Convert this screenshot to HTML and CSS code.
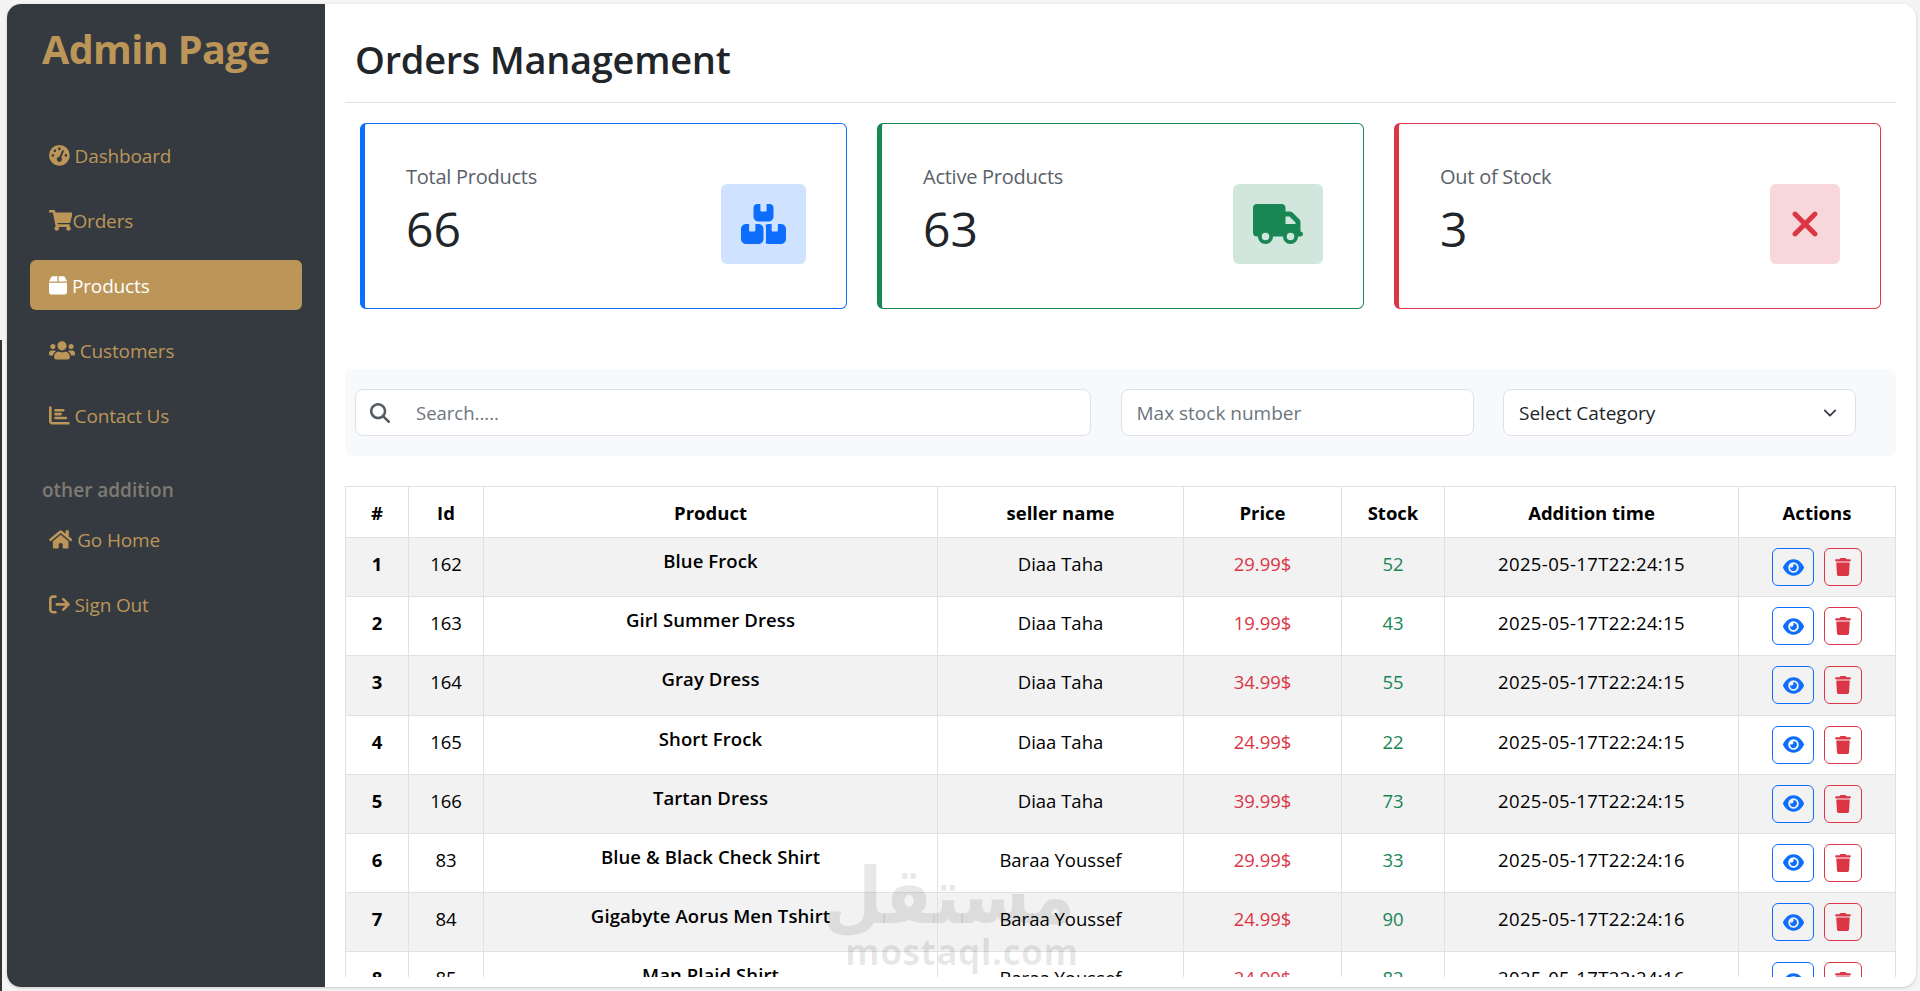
FILE: index.html
```html
<!DOCTYPE html>
<html lang="en">
<head>
<meta charset="utf-8">
<title>Orders Management</title>
<link rel="stylesheet" href="styles.css">
</head>
<body>
<svg class="sprite" aria-hidden="true"><defs>
<path id="eye" d="M288 32c-80.8 0-145.5 36.8-192.6 80.6C48.6 156 17.3 208 2.5 243.7c-3.3 7.9-3.3 16.7 0 24.6C17.3 304 48.6 356 95.4 399.4C142.5 443.2 207.2 480 288 480s145.5-36.8 192.6-80.6c46.8-43.5 78.1-95.4 93-131.1c3.3-7.9 3.3-16.7 0-24.6c-14.9-35.7-46.2-87.7-93-131.1C433.5 68.8 368.8 32 288 32zM144 256a144 144 0 1 1 288 0 144 144 0 1 1 -288 0zm144-64c0 35.3-28.7 64-64 64c-7.1 0-13.9-1.2-20.3-3.3c-5.5-1.8-11.9 1.6-11.7 7.4c.3 6.9 1.3 13.8 3.2 20.7c13.7 51.2 66.4 81.6 117.6 67.9s81.6-66.4 67.9-117.6c-11.1-41.5-47.8-69.4-88.6-71.1c-5.8-.2-9.2 6.1-7.4 11.7c2.1 6.4 3.3 13.2 3.3 20.3z"/>
<path id="trash" d="M135.2 17.7L128 32 32 32C14.3 32 0 46.3 0 64S14.3 96 32 96l384 0c17.7 0 32-14.3 32-32s-14.3-32-32-32l-96 0-7.2-14.3C309.4 6.8 298.3 0 286.2 0L161.8 0c-12.1 0-23.2 6.8-28.6 17.7zM416 128L32 128 53.2 467c1.6 25.3 22.6 45 47.9 45l245.8 0c25.3 0 46.3-19.7 47.9-45L416 128z"/>
</defs></svg>
<div class="edge"></div>
<div class="frame">
  <aside class="sidebar">
    <h2 class="brand">Admin Page</h2>
    <nav class="nav">
      <a class="nav-item"><svg class="ic" viewBox="0 0 512 512"><path d="M0 256a256 256 0 1 1 512 0A256 256 0 1 1 0 256zM288 96a32 32 0 1 0 -64 0 32 32 0 1 0 64 0zM256 416c35.3 0 64-28.7 64-64c0-17.4-6.9-33.1-18.1-44.6L366 161.7c5.3-12.1-.2-26.3-12.3-31.6s-26.3 .2-31.6 12.3L257.9 288c-.6 0-1.3 0-1.9 0c-35.3 0-64 28.7-64 64s28.7 64 64 64zM176 144a32 32 0 1 0 -64 0 32 32 0 1 0 64 0zM96 288a32 32 0 1 0 0-64 32 32 0 1 0 0 64zm352-32a32 32 0 1 0 -64 0 32 32 0 1 0 64 0z"/></svg> Dashboard</a>
      <a class="nav-item"><svg class="ic" viewBox="0 0 576 512"><path d="M528.12 301.319l47.273-208C578.806 78.301 567.391 64 551.99 64H159.208l-9.166-44.81C147.758 8.021 137.93 0 126.529 0H24C10.745 0 0 10.745 0 24v16c0 13.255 10.745 24 24 24h69.883l70.248 343.435C147.325 417.1 136 435.222 136 456c0 30.928 25.072 56 56 56s56-25.072 56-56c0-15.674-6.447-29.835-16.824-40h209.647C430.447 426.165 424 440.326 424 456c0 30.928 25.072 56 56 56s56-25.072 56-56c0-22.172-12.888-41.332-31.579-50.405l5.517-24.276c3.413-15.018-8.002-29.319-23.403-29.319H218.117l-6.545-32h293.145c11.206 0 20.92-7.754 23.403-18.681z"/></svg>Orders</a>
      <a class="nav-item active"><svg class="ic" viewBox="0 0 448 512"><path d="M50.7 58.5L0 160l208 0 0-128L93.7 32C75.5 32 58.9 42.3 50.7 58.5zM240 160l208 0L397.3 58.5C389.1 42.3 372.5 32 354.3 32L240 32l0 128zm208 32L0 192 0 416c0 35.3 28.7 64 64 64l320 0c35.3 0 64-28.7 64-64l0-224z"/></svg> Products</a>
      <a class="nav-item"><svg class="ic" viewBox="0 0 640 512"><path d="M96 224c35.3 0 64-28.7 64-64s-28.7-64-64-64-64 28.7-64 64 28.7 64 64 64zm448 0c35.3 0 64-28.7 64-64s-28.7-64-64-64-64 28.7-64 64 28.7 64 64 64zm32 32h-64c-17.6 0-33.5 7.1-45.1 18.6 40.3 22.1 68.9 62 75.1 109.4h66c17.7 0 32-14.3 32-32v-32c0-35.3-28.7-64-64-64zm-256 0c61.9 0 112-50.1 112-112S381.9 32 320 32 208 82.1 208 144s50.1 112 112 112zm76.8 32h-8.3c-20.8 10-43.9 16-68.5 16s-47.6-6-68.5-16h-8.3C179.6 288 128 339.6 128 403.2V432c0 26.5 21.5 48 48 48h288c26.5 0 48-21.5 48-48v-28.8c0-63.6-51.6-115.2-115.2-115.2zm-223.7-13.4C161.5 263.1 145.6 256 128 256H64c-35.3 0-64 28.7-64 64v32c0 17.7 14.3 32 32 32h65.9c6.3-47.4 34.9-87.3 75.2-109.4z"/></svg> Customers</a>
      <a class="nav-item"><svg class="ic" viewBox="0 0 512 512"><path d="M32 32c17.7 0 32 14.3 32 32l0 336c0 8.8 7.2 16 16 16l400 0c17.7 0 32 14.3 32 32s-14.3 32-32 32L80 480c-44.2 0-80-35.8-80-80L0 64C0 46.3 14.3 32 32 32zm96 96c0-17.7 14.3-32 32-32l192 0c17.7 0 32 14.3 32 32s-14.3 32-32 32l-192 0c-17.7 0-32-14.3-32-32zm32 64l128 0c17.7 0 32 14.3 32 32s-14.3 32-32 32l-128 0c-17.7 0-32-14.3-32-32s14.3-32 32-32zm0 96l256 0c17.7 0 32 14.3 32 32s-14.3 32-32 32l-256 0c-17.7 0-32-14.3-32-32s14.3-32 32-32z"/></svg> Contact Us</a>
    </nav>
    <div class="nav-group">other addition</div>
    <nav class="nav">
      <a class="nav-item"><svg class="ic" viewBox="0 0 576 512"><path d="M280.37 148.26L96 300.11V464a16 16 0 0 0 16 16l112.06-.29a16 16 0 0 0 15.92-16V368a16 16 0 0 1 16-16h64a16 16 0 0 1 16 16v95.64a16 16 0 0 0 16 16.05L464 480a16 16 0 0 0 16-16V300L295.67 148.26a12.19 12.19 0 0 0-15.3 0zM571.6 251.47L488 182.56V44.05a12 12 0 0 0-12-12h-56a12 12 0 0 0-12 12v72.61L318.47 43a48 48 0 0 0-61 0L4.34 251.47a12 12 0 0 0-1.6 16.9l25.5 31A12 12 0 0 0 45.15 301l235.22-193.74a12.19 12.19 0 0 1 15.3 0L530.9 301a12 12 0 0 0 16.9-1.6l25.5-31a12 12 0 0 0-1.7-16.93z"/></svg> Go Home</a>
      <a class="nav-item"><svg class="ic" viewBox="0 0 512 512"><path d="M502.6 278.6c12.5-12.5 12.5-32.8 0-45.3l-128-128c-12.5-12.5-32.8-12.5-45.3 0s-12.5 32.8 0 45.3L402.7 224 192 224c-17.7 0-32 14.3-32 32s14.3 32 32 32l210.7 0-73.4 73.4c-12.5 12.5-12.5 32.8 0 45.3s32.8 12.5 45.3 0l128-128zM160 96c17.7 0 32-14.3 32-32s-14.3-32-32-32L96 32C43 32 0 75 0 128L0 384c0 53 43 96 96 96l64 0c17.7 0 32-14.3 32-32s-14.3-32-32-32l-64 0c-17.7 0-32-14.3-32-32l0-256c0-17.7 14.3-32 32-32l64 0z"/></svg> Sign Out</a>
    </nav>
  </aside>
  <main class="main">
    <header class="head"><h1 class="title">Orders Management</h1></header>
    <section class="cards">
      <div class="card card-blue">
        <div class="stat"><div class="stat-label">Total Products</div><div class="stat-value">66</div></div>
        <div class="stat-icon icon-blue"><svg class="stat-svg" viewBox="0 0 576 512"><path d="M248 0L208 0c-26.5 0-48 21.5-48 48l0 112c0 35.3 28.7 64 64 64l128 0c35.3 0 64-28.7 64-64l0-112c0-26.5-21.5-48-48-48L328 0l0 80c0 8.8-7.2 16-16 16l-48 0c-8.8 0-16-7.2-16-16l0-80zM64 256c-35.3 0-64 28.7-64 64L0 448c0 35.3 28.7 64 64 64l160 0c35.3 0 64-28.7 64-64l0-128c0-35.3-28.7-64-64-64l-40 0 0 80c0 8.8-7.2 16-16 16l-48 0c-8.8 0-16-7.2-16-16l0-80-40 0zM352 512l160 0c35.3 0 64-28.7 64-64l0-128c0-35.3-28.7-64-64-64l-40 0 0 80c0 8.8-7.2 16-16 16l-48 0c-8.8 0-16-7.2-16-16l0-80-40 0c-15 0-28.8 5.1-39.7 13.8c4.9 10.4 7.7 22 7.7 34.2l0 160c0 12.2-2.8 23.8-7.7 34.2C323.2 506.9 337 512 352 512z"/></svg></div>
      </div>
      <div class="card card-green">
        <div class="stat"><div class="stat-label">Active Products</div><div class="stat-value">63</div></div>
        <div class="stat-icon icon-green"><svg class="stat-svg" viewBox="0 0 640 512"><path d="M48 0C21.5 0 0 21.5 0 48L0 368c0 26.5 21.5 48 48 48l16 0c0 53 43 96 96 96s96-43 96-96l128 0c0 53 43 96 96 96s96-43 96-96l32 0c17.7 0 32-14.3 32-32s-14.3-32-32-32l0-64 0-32 0-18.7c0-17-6.7-33.3-18.7-45.3L512 114.7c-12-12-28.3-18.7-45.3-18.7L416 96l0-48c0-26.5-21.5-48-48-48L48 0zM416 160l50.7 0L544 237.3l0 18.7-128 0 0-96zM112 416a48 48 0 1 1 96 0 48 48 0 1 1 -96 0zm368-48a48 48 0 1 1 0 96 48 48 0 1 1 0-96z"/></svg></div>
      </div>
      <div class="card card-red">
        <div class="stat"><div class="stat-label">Out of Stock</div><div class="stat-value">3</div></div>
        <div class="stat-icon icon-red"><svg class="stat-svg" viewBox="0 0 384 512"><path d="M342.6 150.6c12.5-12.5 12.5-32.8 0-45.3s-32.8-12.5-45.3 0L192 210.7 86.6 105.4c-12.5-12.5-32.8-12.5-45.3 0s-12.5 32.8 0 45.3L146.7 256 41.4 361.4c-12.5 12.5-12.5 32.8 0 45.3s32.8 12.5 45.3 0L192 301.3 297.4 406.6c12.5 12.5 32.8 12.5 45.3 0s12.5-32.8 0-45.3L237.3 256 342.6 150.6z"/></svg></div>
      </div>
    </section>
    <section class="filters">
      <label class="search">
        <svg class="search-ic" viewBox="0 0 512 512"><path d="M416 208c0 45.9-14.9 88.3-40 122.7L502.6 457.4c12.5 12.5 12.5 32.8 0 45.3s-32.8 12.5-45.3 0L330.7 376c-34.4 25.2-76.8 40-122.7 40C93.1 416 0 322.9 0 208S93.1 0 208 0S416 93.1 416 208zM208 352a144 144 0 1 0 0-288 144 144 0 1 0 0 288z"/></svg>
        <input class="search-input" type="text" placeholder="Search.....">
      </label>
      <input class="field" type="text" placeholder="Max stock number">
      <div class="select-wrap">
        <select class="field select"><option>Select Category</option></select>
        <svg class="chevron" viewBox="0 0 16 16"><path d="M2 5l6 6 6-6" fill="none" stroke="currentColor" stroke-width="2" stroke-linecap="round" stroke-linejoin="round"/></svg>
      </div>
    </section>
    <div class="table-wrap">
      <table class="table">
        <colgroup><col class="c1"><col class="c2"><col class="c3"><col class="c4"><col class="c5"><col class="c6"><col class="c7"><col class="c8"></colgroup>
        <thead><tr><th>#</th><th>Id</th><th>Product</th><th>seller name</th><th>Price</th><th>Stock</th><th>Addition time</th><th>Actions</th></tr></thead>
        <tbody>
          <tr><td class="num">1</td><td>162</td><td class="prod">Blue Frock</td><td>Diaa Taha</td><td class="price">29.99$</td><td class="stock">52</td><td class="time">2025-05-17T22:24:15</td><td class="acts"><div class="acts-row"><button class="btn btn-view"><svg class="btn-eye" viewBox="0 0 576 512"><use href="#eye"/></svg></button><button class="btn btn-del"><svg class="btn-trash" viewBox="0 0 448 512"><use href="#trash"/></svg></button></div></td></tr>
          <tr><td class="num">2</td><td>163</td><td class="prod">Girl Summer Dress</td><td>Diaa Taha</td><td class="price">19.99$</td><td class="stock">43</td><td class="time">2025-05-17T22:24:15</td><td class="acts"><div class="acts-row"><button class="btn btn-view"><svg class="btn-eye" viewBox="0 0 576 512"><use href="#eye"/></svg></button><button class="btn btn-del"><svg class="btn-trash" viewBox="0 0 448 512"><use href="#trash"/></svg></button></div></td></tr>
          <tr><td class="num">3</td><td>164</td><td class="prod">Gray Dress</td><td>Diaa Taha</td><td class="price">34.99$</td><td class="stock">55</td><td class="time">2025-05-17T22:24:15</td><td class="acts"><div class="acts-row"><button class="btn btn-view"><svg class="btn-eye" viewBox="0 0 576 512"><use href="#eye"/></svg></button><button class="btn btn-del"><svg class="btn-trash" viewBox="0 0 448 512"><use href="#trash"/></svg></button></div></td></tr>
          <tr><td class="num">4</td><td>165</td><td class="prod">Short Frock</td><td>Diaa Taha</td><td class="price">24.99$</td><td class="stock">22</td><td class="time">2025-05-17T22:24:15</td><td class="acts"><div class="acts-row"><button class="btn btn-view"><svg class="btn-eye" viewBox="0 0 576 512"><use href="#eye"/></svg></button><button class="btn btn-del"><svg class="btn-trash" viewBox="0 0 448 512"><use href="#trash"/></svg></button></div></td></tr>
          <tr><td class="num">5</td><td>166</td><td class="prod">Tartan Dress</td><td>Diaa Taha</td><td class="price">39.99$</td><td class="stock">73</td><td class="time">2025-05-17T22:24:15</td><td class="acts"><div class="acts-row"><button class="btn btn-view"><svg class="btn-eye" viewBox="0 0 576 512"><use href="#eye"/></svg></button><button class="btn btn-del"><svg class="btn-trash" viewBox="0 0 448 512"><use href="#trash"/></svg></button></div></td></tr>
          <tr><td class="num">6</td><td>83</td><td class="prod">Blue &amp; Black Check Shirt</td><td>Baraa Youssef</td><td class="price">29.99$</td><td class="stock">33</td><td class="time">2025-05-17T22:24:16</td><td class="acts"><div class="acts-row"><button class="btn btn-view"><svg class="btn-eye" viewBox="0 0 576 512"><use href="#eye"/></svg></button><button class="btn btn-del"><svg class="btn-trash" viewBox="0 0 448 512"><use href="#trash"/></svg></button></div></td></tr>
          <tr><td class="num">7</td><td>84</td><td class="prod">Gigabyte Aorus Men Tshirt</td><td>Baraa Youssef</td><td class="price">24.99$</td><td class="stock">90</td><td class="time">2025-05-17T22:24:16</td><td class="acts"><div class="acts-row"><button class="btn btn-view"><svg class="btn-eye" viewBox="0 0 576 512"><use href="#eye"/></svg></button><button class="btn btn-del"><svg class="btn-trash" viewBox="0 0 448 512"><use href="#trash"/></svg></button></div></td></tr>
          <tr><td class="num">8</td><td>85</td><td class="prod">Man Plaid Shirt</td><td>Baraa Youssef</td><td class="price">24.99$</td><td class="stock">82</td><td class="time">2025-05-17T22:24:16</td><td class="acts"><div class="acts-row"><button class="btn btn-view"><svg class="btn-eye" viewBox="0 0 576 512"><use href="#eye"/></svg></button><button class="btn btn-del"><svg class="btn-trash" viewBox="0 0 448 512"><use href="#trash"/></svg></button></div></td></tr>
        </tbody>
      </table>
    </div>
  </main>
  <div class="watermark"><div class="wm-ar" lang="ar" dir="rtl">مستقل</div><div class="wm-en">mostaql.com</div></div>
</div>
</body>
</html>
```
FILE: styles.css
```css
* { box-sizing: border-box; }
html, body { height: 100%; }
body {
  margin: 0;
  padding: 4px 4px 4px 7px;
  background: #f4f4f4;
  font-family: "Open Sans", "Noto Sans", sans-serif;
  color: #212529;
  overflow: hidden;
}
.sprite { position: absolute; width: 0; height: 0; }
.edge {
  position: absolute;
  left: 0;
  top: 340px;
  bottom: 0;
  width: 2px;
  background: #333;
}
.frame {
  position: relative;
  display: flex;
  height: 983px;
  background: #fff;
  border-radius: 14px;
  overflow: hidden;
  box-shadow: 0 1px 3px rgba(0,0,0,.18);
}
.sidebar {
  flex: 0 0 318px;
  background: #343a40;
  padding: 0 23px;
}
.brand {
  margin: 0;
  padding: 17px 0 0 12px;
  height: 126px;
  font-size: 39.5px;
  line-height: 56px;
  font-weight: 700;
  color: #bc9658;
  letter-spacing: -.6px;
  white-space: nowrap;
}
.nav { display: flex; flex-direction: column; gap: 15px; }
.nav-item {
  display: block;
  height: 50px;
  padding: 0 19px;
  line-height: 52px;
  font-size: 19px;
  letter-spacing: -.15px;
  color: #bc9658;
  border-radius: 6px;
  white-space: nowrap;
}
.nav-item.active { background: #bc9658; color: #fff; }
.ic { height: 20.8px; fill: currentColor; vertical-align: -3px; }
.nav-group {
  padding: 37px 0 0 12px;
  height: 74px;
  line-height: 26px;
  font-size: 19px;
  font-weight: 600;
  letter-spacing: 0;
  color: #7f7b73;
}
.main {
  flex: 1;
  min-width: 0;
  padding: 0 20px 10px 20px;
  display: flex;
  flex-direction: column;
}
.head {
  flex: none;
  height: 99px;
  padding: 27px 0 0 10px;
  border-bottom: 1px solid #dee2e6;
}
.title {
  margin: 0;
  font-size: 38px;
  line-height: 56px;
  font-weight: 600;
  color: #212529;
  letter-spacing: -.28px;
}
.cards {
  flex: none;
  display: grid;
  grid-template-columns: repeat(3, 1fr);
  gap: 30px;
  padding: 20px 15px 0;
}
.card {
  display: flex;
  justify-content: space-between;
  align-items: flex-end;
  height: 186px;
  padding: 0 40px 44px 41px;
  border: 1px solid;
  border-left-width: 5px;
  border-radius: 6px;
}
.card-blue { border-color: #0d6efd; }
.card-green { border-color: #198754; }
.card-red { border-color: #dc3545; }
.stat { align-self: flex-start; padding-top: 39px; }
.stat-label {
  font-size: 20px;
  line-height: 27px;
  color: #5a6168;
  letter-spacing: -.25px;
}
.stat-value {
  font-size: 48px;
  line-height: 62px;
  font-weight: 500;
  color: #212529;
  margin-top: 8px;
}
.stat-icon {
  display: flex;
  align-items: center;
  justify-content: center;
  height: 80px;
  padding: 0 20px;
  border-radius: 6px;
}
.stat-svg { height: 40px; fill: currentColor; display: block; }
.icon-blue { background: #cfe2ff; color: #0d6efd; }
.icon-green { background: #d1e7dd; color: #198754; }
.icon-red { background: #f8d7da; color: #dc3545; }
.filters {
  flex: none;
  display: grid;
  grid-template-columns: 736px 353px 353px;
  column-gap: 29.5px;
  height: 87px;
  margin-top: 60px;
  padding: 20px 0 0 10px;
  background: #f8f9fa;
  border-radius: 8px;
}
.search, .field {
  height: 47px;
  background: #fff;
  border: 1px solid #dee2e6;
  border-radius: 8px;
  font-family: inherit;
  font-size: 18.5px;
  color: #212529;
}
.search { display: flex; align-items: center; padding-left: 14px; }
.search-ic { flex: none; width: 20px; height: 20px; fill: #555c63; }
.search-input {
  flex: 1;
  min-width: 0;
  margin-left: 26px;
  border: 0;
  outline: 0;
  padding: 0;
  font: inherit;
  background: transparent;
}
.field { width: 100%; padding: 0 15px; outline: 0; font-size: 19px; }
.search-input::placeholder, .field::placeholder { color: #6c757d; opacity: 1; }
.select-wrap { position: relative; }
.select { appearance: none; -webkit-appearance: none; }
.chevron {
  position: absolute;
  right: 19px;
  top: 17px;
  width: 14px;
  height: 14px;
  color: #343a40;
  pointer-events: none;
}
.table-wrap {
  flex: none;
  height: 491px;
  margin-top: 30px;
  overflow: hidden;
}
.table {
  width: 1550px;
  table-layout: fixed;
  border-collapse: collapse;
  color: #000;
  font-size: 18.5px;
}
.c1 { width: 63px; }
.c2 { width: 75px; }
.c3 { width: 454px; }
.c4 { width: 246px; }
.c5 { width: 158px; }
.c6 { width: 103px; }
.c7 { width: 294px; }
.c8 { width: 157px; }
th, td {
  border: 1px solid #dee2e6;
  text-align: center;
  white-space: nowrap;
  padding: 0 8px;
}
th { height: 51px; font-weight: 700; line-height: 26px; padding-top: 1px; }
td { height: 59.2px; vertical-align: top; padding-top: 13px; line-height: 26px; }
tbody tr:nth-child(odd) td { background: #f2f2f2; }
.num { font-weight: 700; }
.prod { font-weight: 600; padding-top: 10px; letter-spacing: .1px; }
.price { color: #dc3545; }
.stock { color: #198754; }
.time { letter-spacing: .37px; }
td.acts { padding: 10px 0 0 33px; }
.acts-row { display: flex; gap: 10px; }
.btn {
  display: flex;
  align-items: center;
  justify-content: center;
  height: 38px;
  padding: 0;
  background: transparent;
  border: 1px solid;
  border-radius: 6px;
}
.btn-view { width: 42px; border-color: #0d6efd; color: #0d6efd; }
.btn-del { width: 38px; border-color: #dc3545; color: #dc3545; }
.btn-eye { width: 21px; height: 19px; fill: currentColor; }
.btn-trash { width: 16px; height: 18px; fill: currentColor; }
.watermark {
  position: absolute;
  left: 838px;
  top: 851px;
  width: 230px;
  color: rgba(0,0,0,.09);
  text-align: center;
  pointer-events: none;
}
.wm-ar {
  font-family: "DejaVu Sans", sans-serif;
  font-weight: 700;
  font-size: 69px;
  line-height: 82px;
  white-space: nowrap;
  transform: scaleY(1.13);
}
.wm-en {
  font-family: "Open Sans", sans-serif;
  font-weight: 700;
  font-size: 35.4px;
  line-height: 38px;
  letter-spacing: .4px;
  white-space: nowrap;
  margin-top: -5px;
}
```
